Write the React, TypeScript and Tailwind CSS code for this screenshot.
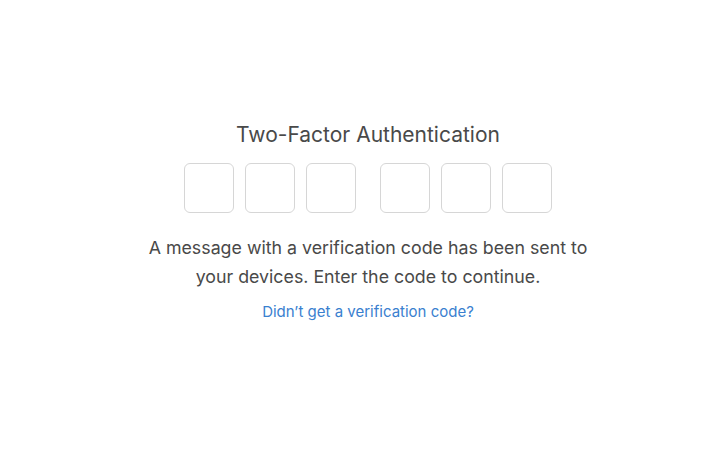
import { useRef } from "react";

const groups = [[0, 1, 2], [3, 4, 5]];

export default function App() {
  const refs = useRef<(HTMLInputElement | null)[]>([]);

  return (
    <div
      className="flex h-[449px] w-full flex-col items-center bg-white pl-8 pt-[119px] text-[#494949]"
      style={{ fontFamily: "Inter, 'Noto Sans', sans-serif" }}
    >
      <h1 className="text-[21px] leading-[32px] font-normal">Two-Factor Authentication</h1>
      <div className="mt-[12px] flex gap-6">
        {groups.map((g, i) => (
          <div key={i} className="flex gap-[11px]">
            {g.map((n) => (
              <input
                key={n}
                ref={(el) => {
                  refs.current[n] = el;
                }}
                maxLength={1}
                inputMode="numeric"
                className="h-[50px] w-[50px] rounded-md border border-[#d6d6d6] text-center text-2xl outline-none"
                onChange={(e) => {
                  if (e.target.value) refs.current[n + 1]?.focus();
                }}
              />
            ))}
          </div>
        ))}
      </div>
      <p className="mt-[20px] text-center text-[17.8px] leading-[29px]">
        A message with a verification code has been sent to
        <br />
        your devices. Enter the code to continue.
      </p>
      <a href="#" className="mt-[10px] text-[15px] text-[#3a80cf]">
        Didn’t get a verification code?
      </a>
    </div>
  );
}
